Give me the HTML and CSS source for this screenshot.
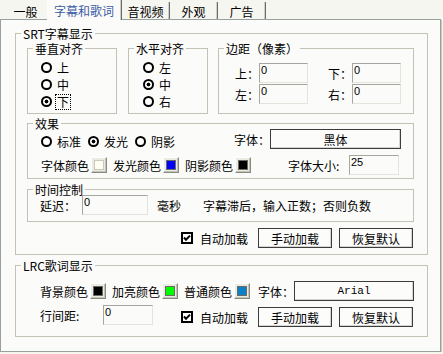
FILE: index.html
```html
<!DOCTYPE html>
<html lang="zh-CN">
<head>
    <meta charset="UTF-8">
    <meta name="viewport" content="width=device-width, initial-scale=1.0">
    <title>字幕和歌词</title>
    <link rel="stylesheet" href="styles.css">
</head>
<body>
    <div class="tabs">
        <div class="tab first">一般</div>
        <div class="tab active">字幕和歌词</div>
        <div class="tab">音视频</div>
        <div class="tab">外观</div>
        <div class="tab">广告</div>
    </div>

    <div class="panel">
        <fieldset class="group srt">
            <legend>SRT字幕显示</legend>
            <div class="srt-body">
                <div class="align-row">
                    <fieldset class="group valign">
                        <legend>垂直对齐</legend>
                        <div class="radio-list">
                            <div class="radio"><span class="dot"></span><span>上</span></div>
                            <div class="radio"><span class="dot"></span><span>中</span></div>
                            <div class="radio"><span class="dot on"></span><span class="focus">下</span></div>
                        </div>
                    </fieldset>
                    <fieldset class="group halign">
                        <legend>水平对齐</legend>
                        <div class="radio-list">
                            <div class="radio"><span class="dot"></span><span>左</span></div>
                            <div class="radio"><span class="dot on"></span><span>中</span></div>
                            <div class="radio"><span class="dot"></span><span>右</span></div>
                        </div>
                    </fieldset>
                    <fieldset class="group margins">
                        <legend>边距（像素）</legend>
                        <div class="margin-body">
                            <div class="margin-row">
                                <label class="m-label">上：</label>
                                <input type="text" class="field m-field" value="0">
                                <label class="m-label second">下：</label>
                                <input type="text" class="field m-field" value="0">
                            </div>
                            <div class="margin-row">
                                <label class="m-label">左：</label>
                                <input type="text" class="field m-field" value="0">
                                <label class="m-label second">右：</label>
                                <input type="text" class="field m-field" value="0">
                            </div>
                        </div>
                    </fieldset>
                </div>

                <fieldset class="group effect">
                    <legend>效果</legend>
                    <div class="effect-body">
                        <div class="effect-row1">
                            <div class="radio-inline">
                                <div class="radio"><span class="dot"></span><span>标准</span></div>
                                <div class="radio"><span class="dot on"></span><span>发光</span></div>
                                <div class="radio"><span class="dot"></span><span>阴影</span></div>
                            </div>
                            <div class="font-pick">
                                <span>字体：</span>
                                <button type="button" class="btn font-btn">黑体</button>
                            </div>
                        </div>
                        <div class="effect-row2">
                            <div class="pick"><span>字体颜色</span><span class="swatch"><span class="chip cream"></span></span></div>
                            <div class="pick"><span>发光颜色</span><span class="swatch"><span class="chip blue"></span></span></div>
                            <div class="pick"><span>阴影颜色</span><span class="swatch"><span class="chip black"></span></span></div>
                            <div class="size-pick">
                                <span class="size-label">字体大小:</span>
                                <input type="text" class="field size-field" value="25">
                            </div>
                        </div>
                    </div>
                </fieldset>

                <fieldset class="group timing">
                    <legend>时间控制</legend>
                    <div class="timing-body">
                        <div class="timing-row">
                            <span class="delay-label">延迟：</span>
                            <input type="text" class="field delay-field" value="0">
                            <span class="unit">毫秒</span>
                            <span class="note">字幕滞后，输入正数；否则负数</span>
                        </div>
                    </div>
                </fieldset>

                <div class="action-row">
                    <div class="check"><svg width="12" height="12" viewBox="0 0 12 12"><rect x="1" y="1" width="10" height="10" fill="#fff" stroke="#000" stroke-width="2"/><polyline points="3,5.5 5,7.8 9,3.6" fill="none" stroke="#000" stroke-width="2"/></svg><span>自动加载</span></div>
                    <button type="button" class="btn">手动加载</button>
                    <button type="button" class="btn">恢复默认</button>
                </div>
            </div>
        </fieldset>

        <fieldset class="group lrc">
            <legend>LRC歌词显示</legend>
            <div class="lrc-body">
                <div class="lrc-row1">
                    <div class="pick"><span>背景颜色</span><span class="swatch"><span class="chip black"></span></span></div>
                    <div class="pick"><span>加亮颜色</span><span class="swatch"><span class="chip green"></span></span></div>
                    <div class="pick"><span>普通颜色</span><span class="swatch"><span class="chip steel"></span></span></div>
                    <div class="font-pick">
                        <span>字体：</span>
                        <button type="button" class="btn font-btn latin">Arial</button>
                    </div>
                </div>
                <div class="lrc-row2">
                    <div class="spacing">
                        <span class="spacing-label">行间距:</span>
                        <input type="text" class="field spacing-field" value="0">
                    </div>
                    <div class="action-row lrc-actions">
                        <div class="check"><svg width="12" height="12" viewBox="0 0 12 12"><rect x="1" y="1" width="10" height="10" fill="#fff" stroke="#000" stroke-width="2"/><polyline points="3,5.5 5,7.8 9,3.6" fill="none" stroke="#000" stroke-width="2"/></svg><span>自动加载</span></div>
                        <button type="button" class="btn">手动加载</button>
                        <button type="button" class="btn">恢复默认</button>
                    </div>
                </div>
            </div>
        </fieldset>
    </div>
</body>
</html>
```

FILE: styles.css
```css
body {
    margin: 0;
    background-color: #f6f6f1;
    font-family: "Noto Sans CJK SC", "Noto Sans", sans-serif;
    font-size: 12px;
    line-height: 15px;
    color: #000;
}

/* tab strip */
.tabs {
    display: flex;
    align-items: flex-end;
    height: 19px;
}
.tab {
    box-sizing: border-box;
    width: 48px;
    height: 17px;
    padding-top: 2px;
    line-height: 15px;
    text-align: center;
    border-right: 1px solid #6c6c6c;
    box-shadow: inset -1px 0 #cfcec6;
}
.tab.first {
    width: 47px;
    padding-left: 4px;
    border-right: none;
    box-shadow: none;
}
.tab.active {
    position: relative;
    z-index: 1;
    width: 75px;
    height: 20px;
    margin-bottom: -1px;
    line-height: 17px;
    color: #3b5ba5;
    background-color: #fbfbf9;
}

/* page body */
.panel {
    box-sizing: border-box;
    width: 441px;
    border: 1px solid #98a0a0;
    background-color: #fbfbf9;
    padding: 6px 0 14px 14px;
    box-shadow: 1px 1px 0 #c9c8bd;
}
.group {
    box-sizing: border-box;
    margin: 0;
    padding: 0;
    min-width: 0;
    border: 1px solid #c3c2b4;
}
.group legend {
    margin-left: 5px;
    padding: 1px 2px;
    line-height: 13px;
}
.srt,
.lrc {
    width: 413px;
}
.lrc {
    margin-top: 3px;
}
.srt-body {
    padding: 0 0 6px 11px;
}

/* alignment groups */
.align-row {
    display: flex;
}
.valign {
    width: 90px;
}
.halign {
    width: 80px;
    margin-left: 11px;
}
.margins {
    width: 196px;
    margin-left: 10px;
}
.radio-list {
    padding: 3px 0 3px 13px;
}
.halign .radio-list {
    padding-left: 14px;
}
.radio {
    display: flex;
    align-items: center;
    gap: 5px;
    height: 17px;
}
.dot {
    box-sizing: border-box;
    width: 11px;
    height: 11px;
    border: 2px solid #000;
    border-radius: 50%;
    background-color: #fff;
}
.dot.on {
    background: radial-gradient(circle, #000 0 1.7px, #fff 2.2px);
}
.focus {
    outline: 1px dotted #000;
    outline-offset: 1px;
    line-height: 12px;
}

.margin-body {
    padding: 7px 0 9px 16px;
}
.margin-row {
    display: flex;
    align-items: center;
    height: 20px;
}
.margin-row + .margin-row {
    margin-top: 1px;
}
.m-label {
    width: 24px;
}
.m-label.second {
    margin-left: 20px;
}

/* text fields */
.field {
    box-sizing: border-box;
    height: 20px;
    margin: 0;
    padding: 0 1px 7px 1px;
    border: 1px solid;
    border-color: #a6a6a0 #e4e3dc #e4e3dc #a6a6a0;
    background-color: #fbfbf9;
    font-family: "Liberation Sans", Arial, sans-serif;
    font-size: 11px;
    color: #000;
    outline: none;
}
.m-field {
    width: 49px;
}
.size-field,
.spacing-field {
    width: 50px;
}
.delay-field {
    width: 66px;
}

/* buttons */
.btn {
    box-sizing: border-box;
    width: 74px;
    height: 20px;
    padding: 0;
    border: 1px solid #3c3c3c;
    background-color: #fcfcfb;
    box-shadow: inset -1px -1px #d6d5cf;
    font: inherit;
    color: #000;
}
.font-btn {
    width: 131px;
}
.lrc .font-btn {
    width: 120px;
}
.font-btn.latin {
    font-family: "Liberation Mono", monospace;
    font-size: 11px;
}

/* effect group */
.effect {
    width: 387px;
    margin-top: 2px;
}
.effect-body {
    padding: 0 12px 3px 13px;
}
.effect-row1 {
    display: flex;
    align-items: flex-end;
    height: 20px;
    margin-top: -2px;
}
.radio-inline {
    display: flex;
    gap: 7px;
}
.radio-inline .radio {
    height: 14px;
    margin-bottom: 1px;
}
.font-pick {
    display: flex;
    align-items: center;
    margin-left: auto;
}
.effect-row2 {
    display: flex;
    align-items: center;
    height: 20px;
    margin-top: 6px;
}
.pick {
    display: flex;
    align-items: center;
    gap: 2px;
    margin-right: 6px;
}
.swatch {
    box-sizing: border-box;
    width: 16px;
    height: 16px;
    padding: 2px;
    border: 1px solid;
    border-color: #fff #8a897f #8a897f #fff;
    background-color: #ecebe2;
    box-shadow: inset -1px -1px #c4c3b8;
}
.chip {
    display: block;
    width: 10px;
    height: 10px;
    border: 1px solid #6a6a66;
    box-sizing: border-box;
}
.chip.cream {
    background-color: #fffff2;
    border-color: #c8c8c0;
}
.chip.blue {
    background-color: #0000ff;
}
.chip.black {
    background-color: #000;
}
.chip.green {
    background-color: #00ff00;
}
.chip.steel {
    background-color: #0a80c8;
}
.size-pick {
    display: flex;
    align-items: center;
    margin-left: auto;
    margin-right: 2px;
}
.size-label {
    width: 61px;
}

/* timing group */
.timing {
    width: 387px;
    margin-top: 3px;
}
.timing-body {
    padding: 0 0 6px 12px;
}
.timing-row {
    display: flex;
    align-items: center;
    height: 20px;
    margin-top: -2px;
}
.delay-label {
    margin-right: 6px;
}
.unit {
    margin-left: 9px;
}
.note {
    margin-left: 22px;
}

/* buttons row */
.action-row {
    display: flex;
    justify-content: flex-end;
    align-items: center;
    gap: 7px;
    height: 20px;
    margin-top: 6px;
    padding-right: 14px;
}
.check {
    display: flex;
    align-items: center;
    gap: 7px;
    margin-right: 3px;
}

/* lrc group */
.lrc-body {
    padding: 8px 13px 9px 24px;
}
.lrc-row1 {
    display: flex;
    align-items: center;
    height: 20px;
}
.lrc-row2 {
    display: flex;
    align-items: flex-end;
    height: 22px;
    margin-top: 4px;
}
.spacing {
    display: flex;
    align-items: center;
    margin-bottom: 2px;
}
.spacing-label {
    width: 63px;
}
.lrc-actions {
    margin: 0 0 0 auto;
    padding-right: 1px;
}
```
